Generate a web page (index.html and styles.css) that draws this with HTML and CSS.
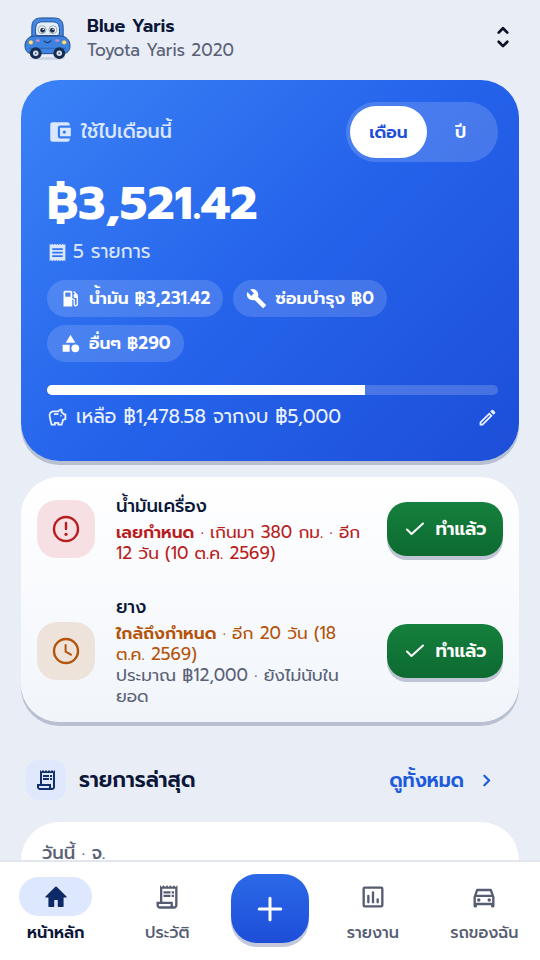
FILE: index.html
```html
<!DOCTYPE html>
<html lang="th">
<head>
<meta charset="utf-8">
<meta name="viewport" content="width=device-width, initial-scale=1">
<title>Blue Yaris</title>
<link rel="stylesheet" href="styles.css">
</head>
<body>
<header class="topbar">
  <svg class="avatar" viewBox="0 0 48 48" aria-hidden="true">
    <ellipse cx="24" cy="44.500" rx="18" ry="1.500" fill="#cbd5e3"/>
    <path d="M8 24V13C8 6 11 3 18 3h12c7 0 10 3 10 10v11" fill="#4388e4" stroke="#204a8c" stroke-width="1"/>
    <path d="M6 22.500q2-1 5-1h26q3 0 5 1 5 3 5 9c0 5-3 8-7 8H8c-4 0-7-3-7-8q0-6 5-9Z" fill="#3f83e0" stroke="#204a8c" stroke-width="1"/>
    <path d="M12 20C11 10 13 7 19 7h10c6 0 8 3 7 13q-1 1-3 1H15q-2 0-3-1Z" fill="#e2effc" stroke="#204a8c" stroke-width="1"/>
    <circle cx="18.500" cy="15" r="4" fill="#fff" stroke="#6b8299" stroke-width=".7"/>
    <circle cx="29.500" cy="15" r="4" fill="#fff" stroke="#6b8299" stroke-width=".7"/>
    <circle cx="19" cy="15.500" r="2.500" fill="#1e3350"/>
    <circle cx="29" cy="15.500" r="2.500" fill="#1e3350"/>
    <circle cx="19.700" cy="14.500" r=".8" fill="#fff"/>
    <circle cx="29.700" cy="14.500" r=".8" fill="#fff"/>
    <path d="M20.500 26.500q3.500 3.500 7 0" fill="none" stroke="#163a78" stroke-width="1.200" stroke-linecap="round"/>
    <ellipse cx="14" cy="26" rx="2.200" ry="1.200" fill="#c392c8"/>
    <ellipse cx="34" cy="26" rx="2.200" ry="1.200" fill="#c392c8"/>
    <circle cx="7" cy="28" r="2.500" fill="#fbe38c" stroke="#59728f" stroke-width=".7"/>
    <circle cx="41" cy="28" r="2.500" fill="#fbe38c" stroke="#59728f" stroke-width=".7"/>
    <path d="M5 34h38" stroke="#2c62b4" stroke-width="1"/>
    <circle cx="12" cy="39" r="6" fill="#162c4e"/><circle cx="12" cy="39" r="2.800" fill="#d8e4f2"/><circle cx="12" cy="39" r="1" fill="#49627f"/>
    <circle cx="36" cy="39" r="6" fill="#162c4e"/><circle cx="36" cy="39" r="2.800" fill="#d8e4f2"/><circle cx="36" cy="39" r="1" fill="#49627f"/>
  </svg>
  <div class="car">
    <h1 class="car-name">Blue Yaris</h1>
    <p class="car-model">Toyota Yaris 2020</p>
  </div>
  <button class="switcher" type="button" aria-label="เปลี่ยนรถ">
    <svg class="i26" viewBox="0 0 24 24" aria-hidden="true"><path d="M8 7l4-4 4 4M8 15.500l4 4 4-4" class="line bolder"/></svg>
  </button>
</header>

<main class="content">
  <section class="card summary">
    <div class="summary-head">
      <h2 class="summary-title">
        <svg class="i26" viewBox="0 0 24 24" aria-hidden="true"><path d="M21 18v1c0 1.100-.9 2-2 2H5c-1.110 0-2-.9-2-2V5c0-1.100.89-2 2-2h14c1.100 0 2 .9 2 2v1h-9c-1.110 0-2 .9-2 2v8c0 1.100.89 2 2 2zm-9-2h10V8H12v8zm4-2.500c-.83 0-1.500-.67-1.500-1.500s.67-1.500 1.500-1.500 1.500.67 1.500 1.500-.67 1.500-1.500 1.500z"/></svg>
        ใช้ไปเดือนนี้
      </h2>
      <div class="toggle">
        <button class="toggle-btn active" type="button">เดือน</button>
        <button class="toggle-btn" type="button">ปี</button>
      </div>
    </div>
    <p class="amount">฿3,521.42</p>
    <p class="count">
      <svg class="i21" viewBox="0 0 24 24" aria-hidden="true"><path d="M18 17H6v-2h12v2zm0-4H6v-2h12v2zm0-4H6V7h12v2zM3 22l1.500-1.500L6 22l1.500-1.500L9 22l1.500-1.500L12 22l1.500-1.500L15 22l1.500-1.500L18 22l1.500-1.500L21 22V2l-1.500 1.500L18 2l-1.500 1.500L15 2l-1.500 1.500L12 2l-1.500 1.500L9 2 7.500 3.500 6 2 4.500 3.500 3 2v20z"/></svg>
      5 รายการ
    </p>
    <ul class="chips">
      <li class="chip">
        <svg class="i21" viewBox="0 0 24 24" aria-hidden="true"><path d="M19.770 7.230l.01-.01-3.720-3.720L15 4.560l2.110 2.110c-.94.36-1.610 1.260-1.610 2.330 0 1.380 1.120 2.500 2.500 2.500.36 0 .69-.08 1-.21v7.210c0 .55-.45 1-1 1s-1-.45-1-1V14c0-1.100-.9-2-2-2h-1V5c0-1.100-.9-2-2-2H6c-1.100 0-2 .9-2 2v16h10v-7.500h1.500v5c0 1.380 1.120 2.500 2.500 2.500s2.500-1.120 2.500-2.500V9c0-.69-.28-1.320-.73-1.770zM12 10H6V5h6v5z"/></svg>
        น้ำมัน ฿3,231.42
      </li>
      <li class="chip">
        <svg class="i21" viewBox="0 0 24 24" aria-hidden="true"><path d="M22.700 19l-9.100-9.100c.9-2.300.4-5-1.500-6.900-2-2-5-2.400-7.400-1.300L9 6 6 9 1.600 4.700C.4 7.100.9 10.100 2.900 12.100c1.900 1.900 4.600 2.400 6.900 1.500l9.100 9.100c.4.4 1 .4 1.400 0l2.300-2.300c.5-.4.5-1.100.1-1.400z"/></svg>
        ซ่อมบำรุง ฿0
      </li>
      <li class="chip">
        <svg class="i21" viewBox="0 0 24 24" aria-hidden="true"><path d="M12 2l-5.500 9h11zM3 13.500h8v8H3z"/><circle cx="17.500" cy="17.500" r="4.500"/></svg>
        อื่นๆ ฿290
      </li>
    </ul>
    <div class="bar"><div class="bar-fill" style="width:70.43%"></div></div>
    <div class="budget">
      <svg class="i21" viewBox="0 0 24 24" aria-hidden="true"><path d="M15 10c0-.55.45-1 1-1s1 .45 1 1-.45 1-1 1-1-.45-1-1zM8 9h5V7H8v2zm14-1.500v6.970l-2.820.94L17.500 21H12v-2h-2v2H4.500S2 12.540 2 9.500C2 6.460 4.460 4 7.500 4h5c.91-1.210 2.360-2 4-2 .83 0 1.500.67 1.500 1.500 0 .21-.04.4-.12.58-.14.34-.26.73-.32 1.150L19.830 7.500H22zm-2 2h-1L15.500 6c0-.65.09-1.290.26-1.910-.97.25-1.760.97-2.090 1.910H7.500C5.570 6 4 7.570 4 9.500c0 1.880 1.220 6.650 2.010 9.500H8v-2h6v2h2.010l1.550-5.150 2.440-.82V9.500z"/></svg>
      <p class="budget-text">เหลือ ฿1,478.58 จากงบ ฿5,000</p>
      <button class="edit" type="button" aria-label="แก้ไขงบ">
        <svg class="i21" viewBox="0 0 24 24" aria-hidden="true"><path d="M14.060 9.020l.92.92L5.920 19H5v-.92l9.060-9.060M17.660 3c-.25 0-.51.1-.7.29l-1.830 1.830 3.750 3.750 1.830-1.830c.39-.39.39-1.020 0-1.410l-2.340-2.340c-.2-.2-.45-.29-.71-.29zm-3.600 3.190L3 17.250V21h3.750L17.810 9.940l-3.750-3.750z"/></svg>
      </button>
    </div>
  </section>

  <section class="card reminders">
    <article class="reminder late">
      <div class="badge"><svg class="i32" viewBox="0 0 24 24" aria-hidden="true"><circle cx="12" cy="12" r="9" class="line medium"/><path d="M12 7.500v4.500" class="line medium"/><circle cx="12" cy="16" r="1.200"/></svg></div>
      <div class="reminder-body">
        <h3 class="reminder-title">น้ำมันเครื่อง</h3>
        <p class="due"><b>เลยกำหนด</b> · เกินมา 380 กม. · อีก<br>12 วัน (10 ต.ค. 2569)</p>
      </div>
      <button class="done" type="button"><svg class="i24" viewBox="0 0 24 24" aria-hidden="true"><path d="M4 12.500l4.500 4.500L20 6.500" class="line"/></svg>ทำแล้ว</button>
    </article>
    <article class="reminder soon">
      <div class="badge"><svg class="i32" viewBox="0 0 24 24" aria-hidden="true"><circle cx="12" cy="12" r="9" class="line medium"/><path d="M11.700 7.500v5l4 2.300" class="line thin"/></svg></div>
      <div class="reminder-body">
        <h3 class="reminder-title">ยาง</h3>
        <p class="due"><b>ใกล้ถึงกำหนด</b> · อีก 20 วัน (18<br>ต.ค. 2569)</p>
        <p class="note">ประมาณ ฿12,000 · ยังไม่นับใน<br>ยอด</p>
      </div>
      <button class="done" type="button"><svg class="i24" viewBox="0 0 24 24" aria-hidden="true"><path d="M4 12.500l4.500 4.500L20 6.500" class="line"/></svg>ทำแล้ว</button>
    </article>
  </section>

  <div class="section-head">
    <div class="section-icon"><svg class="i24" viewBox="0 0 24 24" aria-hidden="true"><path d="M19.500 3.500L18 2l-1.500 1.500L15 2l-1.500 1.500L12 2l-1.500 1.500L9 2 7.500 3.500 6 2v14H3v3c0 1.660 1.340 3 3 3h12c1.660 0 3-1.340 3-3V2l-1.500 1.500zM15 20H6c-.55 0-1-.45-1-1v-1h10v2zm4-1c0 .55-.45 1-1 1s-1-.45-1-1v-3H8V5h11v14zM9 7h6v2H9zm7 0h2v2h-2zM9 10h6v2H9zm7 0h2v2h-2z"/></svg></div>
    <h2 class="section-title">รายการล่าสุด</h2>
    <a class="see-all" href="#all">ดูทั้งหมด<svg class="i21" viewBox="0 0 24 24" aria-hidden="true"><path d="M9.500 6.500l5.500 5.500-5.500 5.500" class="line bolder"/></svg></a>
  </div>

  <section class="card history">
    <h3 class="day">วันนี้ · จ.</h3>
  </section>
</main>

<nav class="nav">
  <a class="nav-item current" href="#home"><span class="nav-icon"><svg class="i28" viewBox="0 0 24 24" aria-hidden="true"><path d="M10.500 20v-5.500h3V20q0 .5.500.5h4q.5 0 .5-.5v-7.500h2.300q.8-.2.200-.9L12.600 3.300q-.6-.5-1.200 0L3 11.600q-.6.700.2.900h2.300V20q0 .5.500.5h4q.5 0 .5-.5Z"/></svg></span>หน้าหลัก</a>
  <a class="nav-item" href="#history"><span class="nav-icon"><svg class="i28" viewBox="0 0 24 24" aria-hidden="true"><path d="M19.500 3.500L18 2l-1.500 1.500L15 2l-1.500 1.500L12 2l-1.500 1.500L9 2 7.500 3.500 6 2v14H3v3c0 1.660 1.340 3 3 3h12c1.660 0 3-1.340 3-3V2l-1.500 1.500zM15 20H6c-.55 0-1-.45-1-1v-1h10v2zm4-1c0 .55-.45 1-1 1s-1-.45-1-1v-3H8V5h11v14zM9 7h6v2H9zm7 0h2v2h-2zM9 10h6v2H9zm7 0h2v2h-2z"/></svg></span>ประวัติ</a>
  <button class="add" type="button" aria-label="เพิ่มรายการ"><svg class="i36" viewBox="0 0 24 24" aria-hidden="true"><path d="M12 4.800v14.400M4.800 12h14.400" class="line"/></svg></button>
  <a class="nav-item" href="#reports"><span class="nav-icon"><svg class="i28" viewBox="0 0 24 24" aria-hidden="true"><rect x="4" y="4" width="16" height="16" rx="1" class="line"/><path d="M8 11v5.500M12 8v8.500M16 14v2.500" class="line"/></svg></span>รายงาน</a>
  <a class="nav-item" href="#car"><span class="nav-icon"><svg class="i28" viewBox="0 0 24 24" aria-hidden="true"><path d="M18.920 6.010C18.720 5.420 18.160 5 17.500 5h-11c-.66 0-1.210.42-1.420 1.010L3 12v8c0 .55.45 1 1 1h1c.55 0 1-.45 1-1v-1h12v1c0 .55.45 1 1 1h1c.55 0 1-.45 1-1v-8l-2.080-5.990zM6.850 7h10.290l1.080 3.110H5.770L6.850 7zM19 17H5v-5h14v5z"/><circle cx="7.500" cy="14.500" r="1.500"/><circle cx="16.500" cy="14.500" r="1.500"/></svg></span>รถของฉัน</a>
</nav>
</body>
</html>
```
FILE: styles.css
```css
* { box-sizing: border-box; margin: 0; padding: 0; }
body {
  display: flex;
  flex-direction: column;
  height: 100vh;
  background: #e8edf6;
  color: #0b1638;
  font-family: Prompt, Kanit, "Noto Sans Thai", "Noto Sans", sans-serif;
  font-size: 17px;
  line-height: 21px;
}
button { border: 0; background: none; color: inherit; font: inherit; cursor: pointer; }
a { color: inherit; text-decoration: none; }
ul { list-style: none; }
svg { flex: none; display: block; fill: currentColor; }
.line { fill: none; stroke: currentColor; stroke-width: 2; stroke-linecap: round; stroke-linejoin: round; }
.bolder { stroke-width: 2.500; }
.medium { stroke-width: 1.800; }
.thin { stroke-width: 1.500; }
.i21 { width: 21px; height: 21px; }
.i24 { width: 24px; height: 24px; }
.i26 { width: 26px; height: 26px; }
.i28 { width: 28px; height: 28px; }
.i32 { width: 32px; height: 32px; }
.i36 { width: 36px; height: 36px; }

.topbar { flex: none; display: flex; align-items: center; height: 76px; margin-bottom: 4px; padding: 0 24px; }
.avatar { width: 47px; height: 47px; }
.car { flex: 1; padding-left: 16px; }
.car-name { font-size: 18px; line-height: 24px; font-weight: 600; }
.car-model { line-height: 24px; color: #5a6176; }
.switcher { color: #0b1226; }

.content { flex: 1; min-height: 0; overflow: hidden; padding: 0 21px; }
.card { border-radius: 38px; box-shadow: 0 4px 0 #b9c1d1; }

.summary {
  padding: 22px 21px 30px 26px;
  color: #fff;
  background: linear-gradient(135deg, #3b82f6 0%, #2563eb 50%, #1d4ed8 100%);
}
.summary-head { display: flex; align-items: center; justify-content: space-between; }
.summary-title { display: flex; align-items: center; gap: 8px; font-size: 19px; line-height: 24px; font-weight: 500; color: #dbe7ff; }
.toggle { display: flex; padding: 4px; border-radius: 30px; background: rgba(255, 255, 255, .16); }
.toggle-btn { width: 67px; height: 52px; border-radius: 26px; font-weight: 600; }
.toggle-btn.active { width: 77px; background: #fff; color: #1d4ed8; }
.amount { margin-top: 10px; font-size: 47px; line-height: 64px; font-weight: 700; }
.count { display: flex; align-items: center; gap: 5px; margin-top: 4px; font-size: 19px; line-height: 24px; color: #dbe7ff; }
.chips { display: flex; flex-wrap: wrap; gap: 8px 10px; margin-top: 16px; }
.chip { display: flex; align-items: center; gap: 8px; height: 37px; padding: 0 13px; border-radius: 19px; background: rgba(255, 255, 255, .15); font-weight: 600; }
.bar { height: 10px; margin-top: 23px; border-radius: 5px; overflow: hidden; background: rgba(255, 255, 255, .18); }
.bar-fill { height: 100%; background: #fff; }
.budget { display: flex; align-items: center; gap: 8px; margin: 9px 0 1px; font-size: 19px; line-height: 26px; color: #eaf1ff; }
.budget-text { flex: 1; }

.reminders { margin-top: 16px; padding: 17px 16px 15px; background: linear-gradient(#fff, #f1f5fb); }
.reminder { display: flex; align-items: center; }
.reminder + .reminder { margin-top: 31px; }
.badge { flex: none; display: grid; place-items: center; width: 58px; height: 58px; border-radius: 20px; }
.late .badge { background: #f6e0e3; color: #b91c1c; }
.soon .badge { background: #ede3db; color: #b45309; }
.reminder-body { flex: 1; padding: 0 16px 0 21px; white-space: nowrap; }
.reminder-title { margin-bottom: 4px; font-size: 18px; line-height: 24px; font-weight: 500; }
.late .due { color: #b91c1c; }
.soon .due { color: #b45309; }
.due b { font-weight: 600; }
.note { color: #5a6176; }
.done { flex: none; display: flex; align-items: center; justify-content: center; gap: 8px; width: 116px; height: 54px; border-radius: 20px; color: #fff; font-size: 18px; font-weight: 600; background: linear-gradient(#15803d, #0d6a31); box-shadow: 0 4px 0 #bfc5d4; }

.section-head { display: flex; align-items: center; gap: 13px; margin-top: 38px; padding: 0 22px 0 5px; }
.section-icon { display: grid; place-items: center; width: 40px; height: 40px; border-radius: 13px; background: #dfe8fd; color: #12306b; }
.section-title { flex: 1; font-size: 21px; line-height: 28px; font-weight: 600; }
.see-all { display: flex; align-items: center; gap: 12px; font-size: 19px; font-weight: 600; color: #1d5bdb; }

.history { min-height: 160px; margin-top: 22px; padding: 18px 21px; background: #fff; }
.day { font-size: 18px; line-height: 26px; font-weight: 500; color: #5a6176; }

.nav { flex: none; display: grid; grid-template-columns: 1fr 1fr 94px 1fr 1fr; justify-items: center; height: 100px; border-top: 2px solid #e2e7ef; background: #fff; }
.nav-item { display: flex; flex-direction: column; align-items: center; gap: 7px; padding-top: 15px; color: #565d73; font-size: 16px; font-weight: 500; white-space: nowrap; }
.nav-icon { display: grid; place-items: center; width: 73px; height: 39px; border-radius: 20px; }
.current { color: #0b1638; font-weight: 600; }
.current .nav-icon { background: #dde7fe; color: #0d2a66; }
.add { display: grid; place-items: center; width: 78px; height: 69px; margin-top: 12px; border-radius: 26px; color: #fff; background: linear-gradient(#2b69e8, #1d4ed8); box-shadow: 0 4px 0 #c3c9d8; }
```
